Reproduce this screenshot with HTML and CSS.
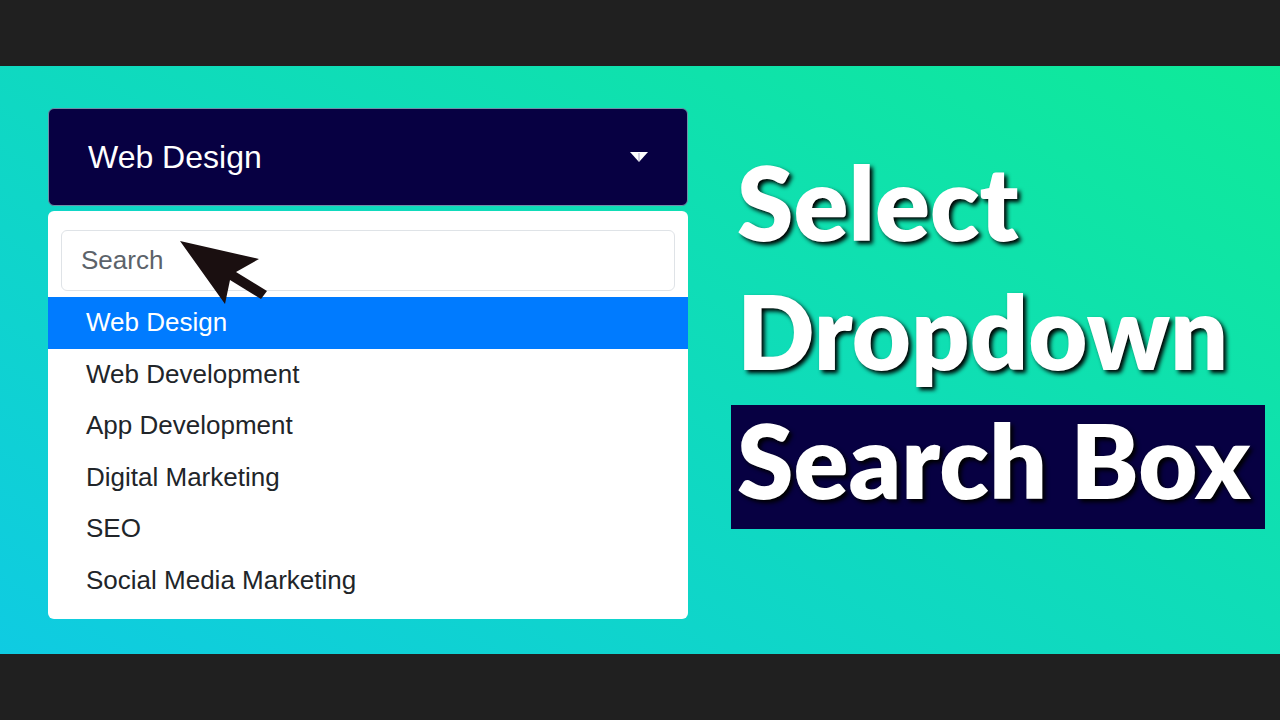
FILE: index.html
```html
<!DOCTYPE html>
<html lang="en">
<head>
  <meta charset="UTF-8">
  <meta name="viewport" content="width=device-width, initial-scale=1.0">
  <title>Select Dropdown Search Box</title>
  <link rel="stylesheet" href="styles.css">
</head>
<body>
  <main class="stage">
    <div class="dropdown">
      <button class="dropdown-toggle" type="button" aria-expanded="true" aria-controls="dropdown-menu">
        <span>Web Design</span>
        <svg class="caret" viewBox="0 0 18 10" aria-hidden="true">
          <path d="M0 0H18L9 10Z" fill="#fff"/>
          <path d="M9 1V9" stroke="#aaa8c4" stroke-width="1"/>
        </svg>
      </button>
      <div class="dropdown-menu" id="dropdown-menu">
        <div class="search-box">
          <input type="text" class="search-input" placeholder="Search" aria-label="Search">
          <svg class="cursor" viewBox="0 0 88 64" aria-hidden="true">
            <path d="M0 0L79 18L56 31L87 50L81 58L50 39L45 63Z" fill="#1a0f10"/>
          </svg>
        </div>
        <ul class="options">
          <li><button type="button" class="option active">Web Design</button></li>
          <li><button type="button" class="option">Web Development</button></li>
          <li><button type="button" class="option">App Development</button></li>
          <li><button type="button" class="option">Digital Marketing</button></li>
          <li><button type="button" class="option">SEO</button></li>
          <li><button type="button" class="option">Social Media Marketing</button></li>
        </ul>
      </div>
    </div>
    <h1 class="title">
      <span>Select</span>
      <span>Dropdown</span>
      <span class="highlight">Search Box</span>
    </h1>
  </main>
</body>
</html>
```
FILE: styles.css
```css
* {
  box-sizing: border-box;
}
body {
  margin: 0;
  min-height: 100vh;
  padding: 66px 0;
  display: flex;
  background: #202020;
  font-family: "Liberation Sans", Arial, sans-serif;
}
button, input {
  font-family: inherit;
}
.stage {
  flex: 1;
  display: flex;
  gap: 43px;
  padding: 42px 15px 35px 48px;
  background: linear-gradient(30deg, #0fcbe2, #0fea98);
}
.dropdown {
  width: 50vw;
  flex-shrink: 0;
  display: flex;
  flex-direction: column;
  gap: 5px;
}
.dropdown-toggle {
  display: flex;
  justify-content: space-between;
  align-items: center;
  height: 98px;
  padding: 0 39px;
  border: 1px solid #6c8fa8;
  border-radius: 6px;
  background: #070042;
  color: #fff;
  font-size: 32px;
  cursor: pointer;
}
.caret {
  width: 18px;
  height: 10px;
}
.dropdown-menu {
  flex: 1;
  display: flex;
  flex-direction: column;
  padding: 19px 0 13px;
  border-radius: 6px;
  background: #fff;
}
.search-box {
  position: relative;
  padding: 0 13px 6px;
}
.search-input {
  display: block;
  width: 100%;
  height: 61px;
  padding: 0 19px;
  border: 1px solid #dfe3e7;
  border-radius: 6px;
  font-size: 26px;
}
.search-input::placeholder {
  color: #5c636a;
}
.cursor {
  position: absolute;
  top: 11px;
  left: 132px;
  width: 88px;
  height: 64px;
  z-index: 1;
  pointer-events: none;
}
.options {
  flex: 1;
  display: flex;
  flex-direction: column;
  list-style: none;
  margin: 0;
  padding: 0;
}
.options li {
  flex: 1;
  display: flex;
}
.option {
  flex: 1;
  padding: 0 38px;
  border: none;
  background: transparent;
  color: #212529;
  font-size: 26px;
  text-align: left;
  cursor: pointer;
}
.option.active {
  background: #007bff;
  color: #fff;
}
.title {
  flex: 1;
  display: flex;
  flex-direction: column;
  align-self: flex-start;
  gap: 5px;
  margin: 0;
  padding-top: 39px;
  color: #fff;
  font-family: Lato, "Open Sans", sans-serif;
  font-size: 102px;
  font-weight: 800;
  line-height: 110px;
  text-shadow: 3px 3px 4px #000;
  white-space: nowrap;
}
.title span {
  padding: 0 6px 14px;
}
.title .highlight {
  background: #070042;
}
```
